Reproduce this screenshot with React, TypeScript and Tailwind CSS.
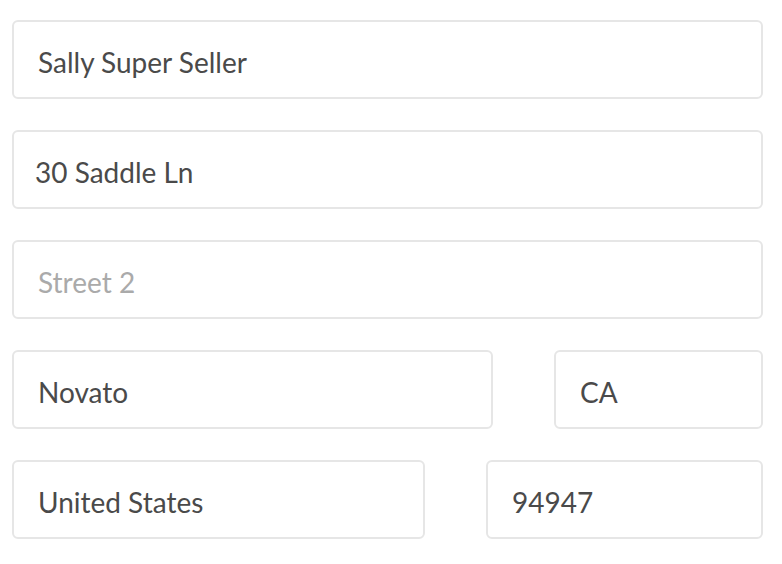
import React from "react";

function Field({ text, placeholder, w, pl = "pl-[24px]" }: { text?: string; placeholder?: string; w: string; pl?: string }) {
  return (
    <div
      className={`${w} h-[79px] rounded-[6px] border-2 border-[#e6e6e6] bg-white flex items-center ${pl} pt-[4px] text-[28px] leading-none`}
    >
      {text ? (
        <span className="text-[#4a4a4a]">{text}</span>
      ) : (
        <span className="text-[#aaaaaa]">{placeholder}</span>
      )}
    </div>
  );
}

export default function App() {
  return (
    <div
      className="w-[782px] h-[564px] bg-white pt-[20px] pl-[12px]"
      style={{ fontFamily: "Lato, 'Open Sans', sans-serif" }}
    >
      <div className="w-[751px] flex flex-col gap-[31px]">
        <Field text="Sally Super Seller" w="w-full" />
        <Field text="30 Saddle Ln" w="w-full" pl="pl-[21px]" />
        <Field placeholder="Street 2" w="w-full" />
        <div className="flex justify-between">
          <Field text="Novato" w="w-[481px]" />
          <Field text="CA" w="w-[209px]" />
        </div>
        <div className="flex justify-between">
          <Field text="United States" w="w-[413px]" />
          <Field text="94947" w="w-[277px]" />
        </div>
      </div>
    </div>
  );
}
